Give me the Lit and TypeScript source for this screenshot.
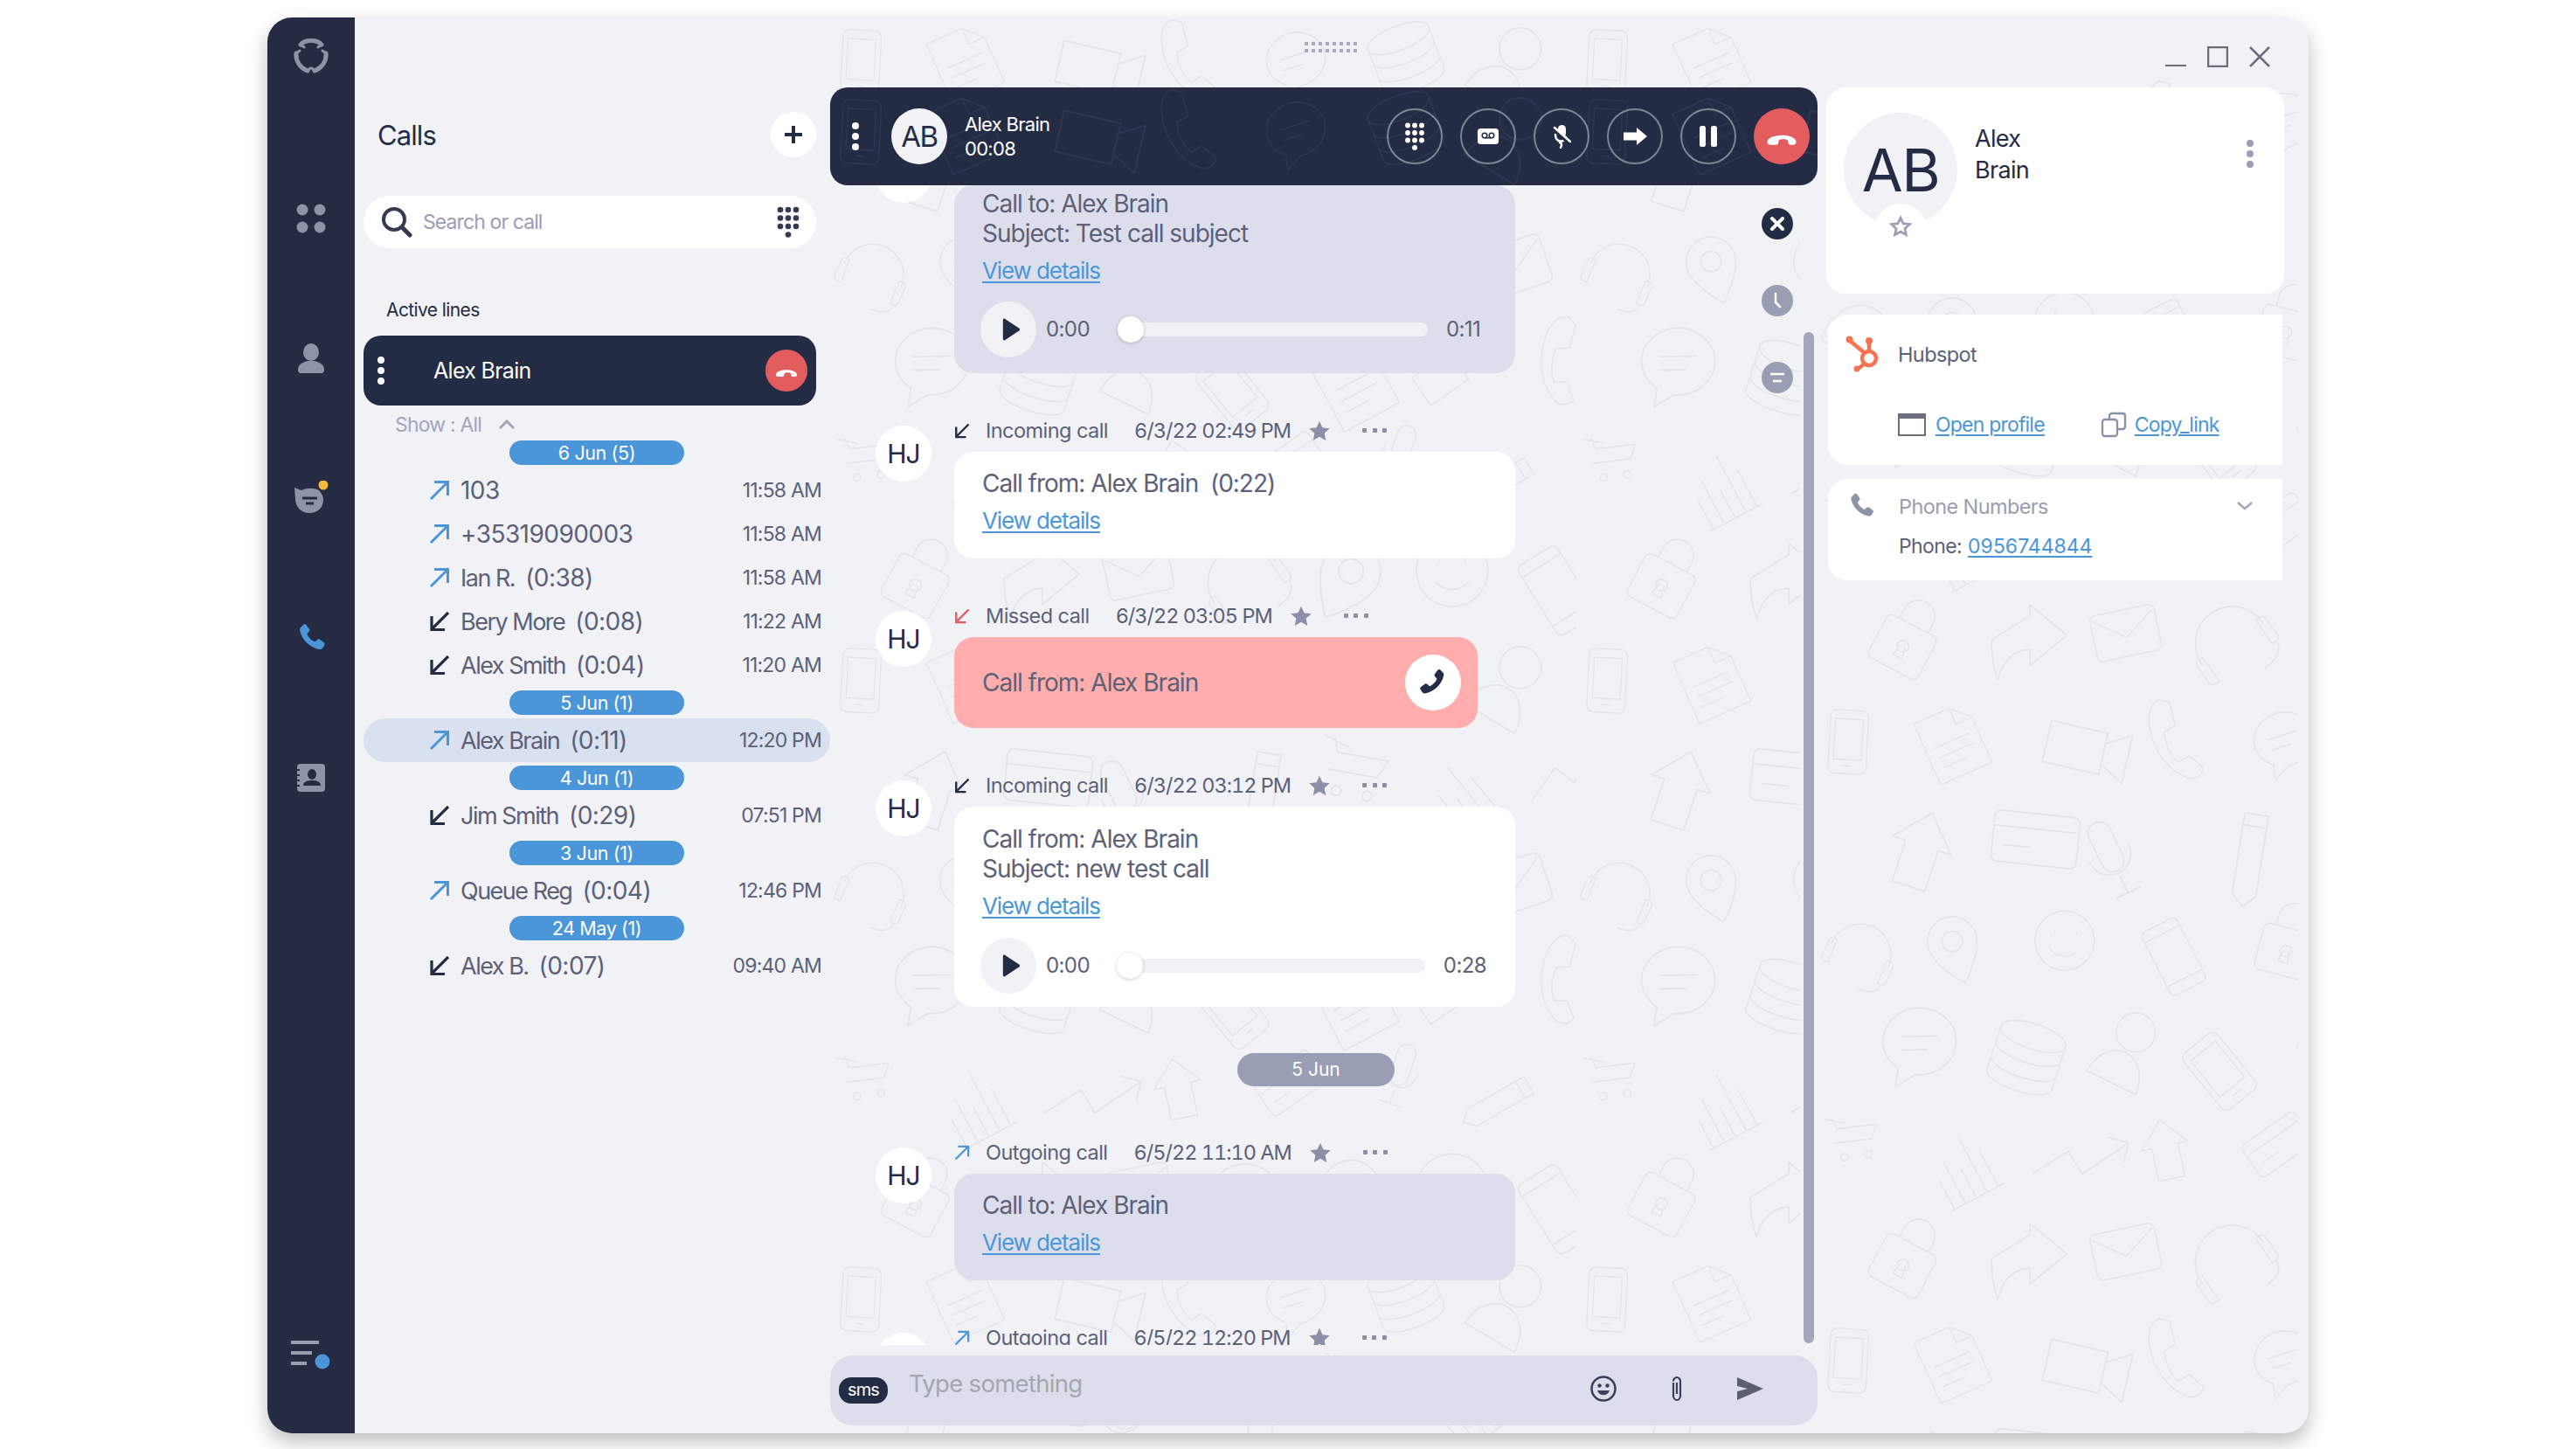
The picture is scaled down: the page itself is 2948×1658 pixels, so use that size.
import { LitElement, html, css, svg } from "lit";
import { customElement } from "lit/decorators.js";

const shapes = [
  "M0 10a10 10 0 0 1 10-10h40a10 10 0 0 1 10 10v80a10 10 0 0 1-10 10H10a10 10 0 0 1-10-10zM8 14h44v64H8zM24 88h12",
  "M0 8a8 8 0 0 1 8-8h74a8 8 0 0 1 8 8v48a8 8 0 0 1-8 8H8a8 8 0 0 1-8-8zM4 8l41 30 41-30",
  "M30 0a14 14 0 0 1 14 14v36a14 14 0 0 1-28 0V14A14 14 0 0 1 30 0zM4 40c0 36 52 36 52 0M30 72v22M14 94h32",
  "M0 18c0-24 96-24 96 0s-96 24-96 0M0 18v22c0 22 96 22 96 0V18M0 40v22c0 22 96 22 96 0V40M0 62v20c0 22 96 22 96 0V62",
  "M0 44a8 8 0 0 1 8-8h60a8 8 0 0 1 8 8v50a8 8 0 0 1-8 8H8a8 8 0 0 1-8-8zM16 36V22a22 22 0 0 1 44 0v14M38 60a8 8 0 1 0 .1 0M34 68l-3 16h14l-3-16",
  "M20 90V40H4L40 0l36 40H60v50z",
  "M10 0C-4 10-4 30 10 58c14 26 34 42 60 48 14 2 22-8 22-18L68 74 54 86C40 78 30 62 26 46l14-12L26 2z",
  "M44 0a44 44 0 1 1-.1 0zM28 30v4M60 30v4M24 58c10 12 30 12 40 0",
  "M4 50v40M20 30v60M36 50v40M52 10v80M68 40v50M0 92h76",
  "M0 0h58l26 26v74H0zM58 0v26h26M14 46h56M14 62h56M14 78h36",
  "M0 60a48 48 0 0 1 96 0M-6 58a6 6 0 0 1 6-6h6v38H0a6 6 0 0 1-6-6zM102 58a6 6 0 0 0-6-6h-6v38h6a6 6 0 0 0 6-6zM96 90c0 14-14 20-30 20",
  "M0 88L68 20l20 20-68 68H0zM58 30l20 20",
  "M36 0a26 26 0 1 1-.1 0zM0 100c2-30 20-44 36-44s34 14 36 44z",
  "M0 44l48-30V0l46 38-46 38V56C30 56 14 68 8 94 2 78 0 60 0 44z",
  "M0 8a8 8 0 0 1 8-8h84a8 8 0 0 1 8 8v44a8 8 0 0 1-8 8H8a8 8 0 0 1-8-8zM0 18h100M14 40h30",
  "M44 0C20 0 0 18 0 40c0 14 8 24 18 32l-4 22 24-14h6c24 0 44-18 44-40S68 0 44 0zM22 34h44M22 50h30",
  "M0 8a8 8 0 0 1 8-8h40a8 8 0 0 1 8 8v84a8 8 0 0 1-8 8H8a8 8 0 0 1-8-8zM0 14h56M0 84h56",
  "M0 70l34-36 22 22 44-50M76 6h24v24",
  "M0 28h66v48H0zM66 40l28-16v56L66 64",
  "M34 0a34 34 0 0 1 34 34c0 26-34 60-34 60S0 60 0 34A34 34 0 0 1 34 0zM34 20a14 14 0 1 0 .1 0",
  "M0 0l30 10M10 40h60l10-22H18l-6-18M24 58a6 6 0 1 0 .1 0M62 58a6 6 0 1 0 .1 0",
];

const tile = (() => {
  const out: unknown[] = [];
  let seed = 17;
  const rnd = () => { seed = (seed * 97 + 13) % 1009; return seed / 1009; };
  for (let r = 0; r < 6; r++) for (let k = 0; k < 7; k++) {
    const x = k * 122 + (r % 2) * 60 + rnd() * 20;
    const y = r * 118 + rnd() * 20;
    const rot = Math.round(rnd() * 80 - 40);
    const sc = 0.72 + rnd() * 0.3;
    out.push(svg`<path transform="translate(${x} ${y}) rotate(${rot} 45 45) scale(${sc})" d=${shapes[(r * 5 + k * 8 + k) % shapes.length]}/>`);
  }
  return out;
})();

const doodles = (c: string, id: string) => svg`
<defs><pattern id=${id} width="854" height="708" patternUnits="userSpaceOnUse">
<g fill="none" stroke=${c} stroke-width="2" stroke-linejoin="round" stroke-linecap="round">${tile}</g></pattern></defs>
<rect width="100%" height="100%" fill=${"url(#" + id + ")"}/>`;

const I = {
  phone: (c: string) => svg`<path fill=${c} d="M6.6 2.2c.6-.4 1.4-.3 1.9.3l2.200 3c.4.6.4 1.300-.1 1.800L9.300 8.800c-.2.2-.2.5-.1.8.9 1.900 3 4.100 5 5 .3.1.6.1.8-.1l1.500-1.300c.5-.5 1.300-.5 1.800-.1l3 2.200c.6.5.7 1.300.3 1.900l-1.200 1.900c-.6.9-1.700 1.400-2.800 1.100C10.900 18.800 5.200 13.100 3.900 6.700c-.3-1.100.2-2.200 1.100-2.800z"/>`,
  hang: svg`<path fill="#fff" d="M3 15.500c0-5.500 18-5.500 18 0 0 1-.8 1.800-1.800 1.800h-1.700c-.8 0-1.500-.7-1.500-1.500v-.8c0-1.700-6-1.700-6 0v.8c0 .8-.7 1.500-1.500 1.500H4.800C3.800 17.300 3 16.500 3 15.500z"/>`,
  up: (c: string) => svg`<path fill="none" stroke=${c} stroke-width="3" d="M2 22L21 3M6 2.500h15.500V18"/>`,
  down: (c: string) => svg`<path fill="none" stroke=${c} stroke-width="3.200" d="M22 2L4 20M3 6v15.500h15"/>`,
  star: (c: string) => svg`<path fill=${c} d="M12 1.500l3.200 7 7.600.900-5.600 5.200 1.500 7.500L12 18.300l-6.700 3.800 1.500-7.500L1.200 9.400l7.600-.900z"/>`,
  play: svg`<path fill="#242b45" d="M5 2.500v19c0 1 1 1.500 1.800 1L21 13c.7-.5.7-1.500 0-2L6.800 1.500C6 1 5 1.500 5 2.500z"/>`,
};

const ic = (body: unknown, size = 24, cls = "") => html`<svg class=${cls} width=${size} height=${size} viewBox="0 0 24 24">${body}</svg>`;

const keypad = (c: string, w: number, h: number) => {
  const dots = [];
  for (let r = 0; r < 3; r++) for (let k = 0; k < 3; k++) dots.push(svg`<circle cx=${4 + k * 9} cy=${4 + r * 9.5} r="3.300" fill=${c}/>`);
  dots.push(svg`<circle cx="13" cy="32.500" r="3.300" fill=${c}/>`);
  return html`<svg width=${w} height=${h} viewBox="0 0 26 36">${dots}</svg>`;
};

type Msg = { kind: "in" | "out" | "miss"; label: string; date: string; tone: "white" | "blue" | "red"; lines: string[]; link?: boolean; audio?: string; };

const msgs: Msg[] = [
  { kind: "in", label: "Incoming call", date: "6/3/22 02:49 PM", tone: "white", lines: ["Call from: Alex Brain\u00a0 (0:22)"], link: true },
  { kind: "miss", label: "Missed call", date: "6/3/22 03:05 PM", tone: "red", lines: ["Call from: Alex Brain"] },
  { kind: "in", label: "Incoming call", date: "6/3/22 03:12 PM", tone: "white", lines: ["Call from: Alex Brain", "Subject: new test call"], link: true, audio: "0:28" },
];

@customElement("app-root")
export class AppRoot extends LitElement {
  static styles = css`
    :host { display: block; width: 2948px; height: 1658px; background: #fff; font-family: Inter, "Noto Sans", sans-serif; color: #5c6178; overflow: hidden; }
    * { box-sizing: border-box; }
    svg { display: block; flex: none; }
    .page { padding: 20px 306px 18px; height: 100%; }
    .win { display: flex; height: 1620px; width: 2336px; background: #f0f2f6; border-radius: 28px; box-shadow: 0 10px 22px rgba(0,0,0,.26); overflow: hidden; position: relative; }
    .side { width: 100px; flex: none; background: #252b43; display: flex; flex-direction: column; align-items: center; }
    .logo { height: 86px; display: flex; align-items: center; justify-content: center; }
    .nav { margin-top: 64px; display: flex; flex-direction: column; }
    .nav div { height: 160px; display: flex; align-items: center; justify-content: center; position: relative; }
    .spring { flex: 1; }
    .bottom { margin-bottom: 72px; }

    .list { width: 544px; flex: none; padding: 0 0 0 10px; position: relative; z-index: 2; }
    .calls-top { display: flex; align-items: center; justify-content: space-between; height: 52px; margin: 108px 16px 0 16px; }
    .calls-top h1 { margin: 0; font-size: 31px; font-weight: 400; color: #242b45; letter-spacing: -.9px; }
    .plus { width: 52px; height: 52px; border-radius: 50%; background: #fff; display: flex; align-items: center; justify-content: center; }
    .search { margin: 44px 16px 0 0; height: 60px; border-radius: 30px; background: #fff; display: flex; align-items: center; padding: 0 19px 0 20px; }
    .search span { flex: 1; margin-left: 12px; font-size: 23px; letter-spacing: -.9px; color: #9a9db5; }
    .active-t { margin: 57px 0 0 26px; height: 28px; line-height: 28px; font-size: 21px; letter-spacing: -.6px; color: #242b45; }
    .active { margin: 15px 16px 0 0; height: 80px; border-radius: 20px; background: #242b45; display: flex; align-items: center; color: #fff; padding: 0 10px 0 16px; }
    .active .n { flex: 1; margin-left: 56px; font-size: 25px; letter-spacing: -.7px; }
    .hang { width: 48px; height: 48px; border-radius: 50%; background: #e35d5f; display: flex; align-items: center; justify-content: center; }
    .dots3 { display: flex; flex-direction: column; gap: 4px; }
    .dots3 i { display: block; width: 8px; height: 8px; border-radius: 50%; background: #fff; }
    .show { display: flex; align-items: center; margin: 8px 0 0 36px; height: 28px; font-size: 23px; letter-spacing: -.8px; color: #a3a6bb; gap: 20px; }
    .pill { width: 200px; height: 28px; margin: 4px 0 4px 167px; border-radius: 14px; background: #4a96d8; color: #fff; font-size: 21.5px; letter-spacing: -.4px; text-align: center; line-height: 28px; }
    .row { height: 50px; display: flex; align-items: center; padding: 0 10px 0 75px; border-radius: 25px; }
    .row.sel { background: #d9e0ef; }
    .row .t { margin-left: 12px; font-size: 28px; letter-spacing: -.55px; white-space: pre; }
    .row .nm2 { margin-left: 12px; font-size: 27px; letter-spacing: -1.5px; white-space: pre; }
    .row .du { margin-left: 12px; font-size: 28px; letter-spacing: -.55px; }
    .row .sp { flex: 1; }
    .row .h { font-size: 23px; letter-spacing: -.8px; }

    .chat { width: 1130px; flex: none; position: relative; display: flex; flex-direction: column; height: 1620px; }
    .bgl { position: absolute; left: 0; top: 0; width: 1110px; height: 100%; }
    .handle { position: absolute; left: 543px; top: 28px; z-index: 1; }
    .bar { position: relative; margin-top: 80px; height: 112px; flex: none; border-radius: 20px; background: #242b45; color: #fff; display: flex; align-items: center; padding: 0 9px 0 25px; z-index: 3; overflow: hidden; }
    .bar .bgb { position: absolute; inset: 0; width: 100%; height: 100%; }
    .bar > :not(.bgb) { position: relative; }
    .av { border-radius: 50%; background: #fff; display: flex; align-items: center; justify-content: center; color: #242b45; flex: none; width: 64px; height: 64px; font-size: 30px; letter-spacing: -1px; }
    .bar .av { background: #f0f2f6; margin-left: 37px; font-size: 33px; letter-spacing: -1.5px; }
    .who { margin-left: 20px; flex: 1; font-size: 22px; line-height: 28px; letter-spacing: -.7px; }
    .btn { width: 64px; height: 64px; border-radius: 50%; border: 2px solid rgba(255,255,255,.42); display: flex; align-items: center; justify-content: center; margin-left: 20px; flex: none; }
    .btn.end { background: #e35d5f; border: 0; }

    .scroll { flex: none; height: 1327px; overflow: hidden; position: relative; padding-left: 52px; }
    .msg { display: grid; grid-template-columns: 64px 1fr; column-gap: 26px; margin-top: 41px; }
    .msg .av { margin-top: 19px; }
    .msg-first { margin-top: -25px; }
    .msg-first .av { margin-top: -19px; }
    .bub { width: 642px; border-radius: 22px; padding: 20px 33px 0 32px; font-size: 28px; line-height: 34px; letter-spacing: -1px; }
    .bub.white { background: #fff; }
    .bub.blue { background: #dcdfeb; }
    .bub.red { background: #ffadad; width: 599px; height: 104px; padding: 0 19px 0 32px; display: flex; align-items: center; justify-content: space-between; }
    .plain { height: 122px; padding-top: 19px; }
    a { color: #4a96d8; text-decoration: underline; text-underline-offset: 3px; }
    .vd { display: block; margin-top: 9px; font-size: 26px; line-height: 34px; letter-spacing: -1.1px; }
    .head { height: 49px; display: flex; align-items: center; font-size: 23.5px; letter-spacing: -.55px; white-space: nowrap; }
    .head .lb { margin-left: 18px; }
    .head .dt { margin-left: 30px; letter-spacing: -1px; font-variant-numeric: tabular-nums; }
    .head .st { margin-left: 20px; }
    .head .more { margin-left: 36px; display: flex; gap: 6.5px; }
    .head .more i { width: 5px; height: 5px; border-radius: 1px; background: #8b8fa8; display: block; }
    .aud { display: flex; align-items: center; height: 64px; margin-top: 19px; font-size: 24px; letter-spacing: -.6px; }
    .pb { width: 64px; height: 64px; border-radius: 50%; background: #f0f2f6; display: flex; align-items: center; justify-content: center; flex: none; margin-left: -2px; padding-left: 3px; }
    .tt1 { margin-left: 11px; width: 83px; }
    .sl { width: 354px; height: 16px; border-radius: 8px; background: #f0f2f6; position: relative; }
    .sl i { position: absolute; left: -1px; top: -7px; width: 30px; height: 30px; border-radius: 50%; background: #fff; box-shadow: 0 1px 4px rgba(0,0,0,.2); }
    .tt2 { margin-left: 21px; }
    .bub.a1 { padding-top: 4px; height: 215px; margin-top: 25px; }
    .a1 .aud { margin-top: 18px; }
    .tall { height: 229px; }
    .call-b { width: 64px; height: 64px; border-radius: 50%; background: #fff; display: flex; align-items: center; justify-content: center; }
    .chip { width: 180px; height: 38px; border-radius: 19px; background: #9a9eb5; color: #fff; margin: 53px 0 0 414px; text-align: center; line-height: 38px; font-size: 21px; }
    .chip + .msg { margin-top: 51px; }
    .fl { position: absolute; left: 1066px; width: 36px; height: 36px; border-radius: 50%; display: flex; align-items: center; justify-content: center; background: #9a9eb5; z-index: 2; }
    .fl.dk { background: #242b45; top: 218px; }
    .fl.f2 { top: 306px; }
    .fl.f3 { top: 394px; }
    .sbar { position: absolute; left: 1114px; top: 360px; width: 12px; height: 1157px; border-radius: 6px; background: #a3a7bc; z-index: 2; }
    .input { flex: none; margin-top: 12px; height: 80px; background: #dcdfeb; border-radius: 26px; display: flex; padding: 0 62px 0 10px; position: relative; z-index: 3; align-items: flex-start; }
    .sms { width: 56px; height: 30px; margin-top: 25px; border-radius: 14px; background: #242b45; color: #fff; font-size: 20px; letter-spacing: -.8px; text-align: center; line-height: 28px; }
    .ph { flex: 1; margin: 14px 0 0 24px; font-size: 27.5px; line-height: 36px; letter-spacing: -.7px; color: #a4a6b0; }
    .icons { display: flex; align-items: center; height: 76px; gap: 60px; }

    .right { flex: 1; position: relative; }
    .bgr { position: absolute; left: 0; top: 70px; width: 550px; height: 1550px; }
    .ctl { position: absolute; top: 33px; left: 398px; display: flex; gap: 24px; z-index: 2; }
    .rc { position: relative; background: #fff; }
    .prof { margin: 80px 28px 0 10px; height: 236px; border-radius: 22px; padding: 29px 0 0 20px; display: flex; }
    .big { width: 130px; height: 130px; border-radius: 50%; background: #f0f2f6; font-size: 68px; letter-spacing: -1.5px; color: #242b45; display: flex; align-items: center; justify-content: center; position: relative; flex: none; }
    .notch { position: absolute; left: 35px; top: 104px; width: 60px; height: 60px; border-radius: 50%; background: #fff; display: flex; align-items: center; justify-content: center; padding-bottom: 8px; }
    .nm { margin: 12px 0 0 20px; font-size: 27px; line-height: 36px; letter-spacing: -.7px; color: #242b45; flex: 1; }
    .vm { margin: 31px 35px 0 0; display: flex; flex-direction: column; gap: 4px; }
    .vm i { display: block; width: 8px; height: 8px; border-radius: 50%; background: #9a9eb5; }
    .hub { margin: 24px 30px 0 12px; height: 172px; border-radius: 22px 0 0 22px; padding: 24px 0 0 20px; }
    .lr { display: flex; align-items: center; font-size: 23.5px; letter-spacing: -.6px; }
    .lr .lbl { margin-left: 18px; }
    .lnks { display: flex; align-items: center; margin: 45px 0 0 60px; font-size: 23px; letter-spacing: -.8px; }
    .lnks .a1l { margin-left: 11px; }
    .lnks .a2l { margin-left: 9px; }
    .lnks .cp { margin-left: 64px; }
    .pn { margin: 16px 30px 0 12px; height: 116px; border-radius: 22px 0 0 22px; padding: 14px 0 0 21px; }
    .pn .g { color: #9a9db0; flex: 1; }
    .pn .lr .lbl { margin-left: 26px; }
    .pn .cv { margin-right: 33px; }
    .pl { margin: 15px 0 0 60px; font-size: 23px; letter-spacing: -.6px; }
    .pl a { letter-spacing: 0; margin-left: 7px; }
    .shift { margin-top: 6px; }
  `;

  private head(m: { kind: string; label: string; date: string }) {
    const arrow = m.kind === "out" ? I.up("#4a96d8") : m.kind === "miss" ? I.down("#e35d5f") : I.down("#242b45");
    return html`<div class="head">${ic(arrow, 18)}<span class="lb">${m.label}</span><span class="dt">${m.date}</span><span class="st">${ic(I.star("#8b8fa8"), 26)}</span><span class="more"><i></i><i></i><i></i></span></div>`;
  }

  private audio(d: string) {
    return html`<div class="aud"><div class="pb">${ic(I.play, 28)}</div><span class="tt1">0:00</span><div class="sl"><i></i></div><span class="tt2">${d}</span></div>`;
  }

  private msg(m: Msg) {
    return html`<div class="msg"><div class="av">HJ</div><div>${this.head(m)}
      ${m.tone === "red"
        ? html`<div class="bub red"><span>${m.lines[0]}</span><div class="call-b">${ic(svg`<g transform="translate(24 0) scale(-1 1)">${I.phone("#242b45")}</g>`, 36)}</div></div>`
        : html`<div class="bub ${m.tone} ${m.audio ? "tall" : "plain"}">${m.lines.map(l => html`<div>${l}</div>`)}${m.link ? html`<a class="vd">View details</a>` : ""}${m.audio ? this.audio(m.audio) : ""}</div>`}
    </div></div>`;
  }

  private row(kind: "in" | "out", name: string, dur: string, h: string, sel = false) {
    return html`<div class="row ${sel ? "sel" : ""}">${ic(kind === "out" ? I.up("#4a96d8") : I.down("#242b45"), 24)}${dur ? html`<span class="nm2">${name}</span><span class="du">${dur}</span>` : html`<span class="t">${name}</span>`}<span class="sp"></span><span class="h">${h}</span></div>`;
  }

  render() {
    const grip = [];
    for (let r = 0; r < 2; r++) for (let k = 0; k < 8; k++) grip.push(svg`<rect x=${k * 8} y=${r * 8} width="4" height="4" fill="#a9abc0"/>`);
    return html`<div class="page"><div class="win">
      <div class="side">
        <div class="logo"><svg width="42" height="42" viewBox="0 0 42 42" fill="none" stroke="#8f93a8" stroke-width="5" stroke-linecap="round"><path d="M9 9C14 3 28 3 33 9"/><path d="M4 19C3 28 9 36 17 39M38 19C39 28 33 36 25 39"/><path stroke-width="3" d="M9 9l4 3M33 9l-4 3M4 19l4-3M38 19l-4-3M17 39l3-3M25 39l-3-3"/></svg></div>
        <div class="nav">
          <div><svg width="34" height="34" viewBox="0 0 34 34" fill="#8f93a8"><circle cx="7" cy="7" r="6.500"/><circle cx="27" cy="7" r="6.500"/><circle cx="7" cy="27" r="6.500"/><circle cx="27" cy="27" r="6.500"/></svg></div>
          <div><svg width="30" height="34" viewBox="0 0 30 34" fill="#8f93a8"><ellipse cx="15" cy="10" rx="9" ry="10"/><path d="M0 30c0-6 6-9 11-10h8c5 1 11 4 11 10 0 2-1 4-3 4H3c-2 0-3-2-3-4z"/></svg></div>
          <div><svg class="shift" width="46" height="46" viewBox="0 0 46 46"><path fill="#8f93a8" d="M4 8l8 3c7-3 14-3 20 0 3 3 5 7 5 11 0 9-7 15-16 15S5 30 5 21z"/><path stroke="#252b43" stroke-width="3" d="M13 20h17M17 26h9"/><circle cx="37" cy="5" r="5.500" fill="#f5b93c"/></svg></div>
          <div>${ic(I.phone("#4a96d8"), 38)}</div>
          <div><svg width="34" height="32" viewBox="0 0 34 32"><rect x="1" width="32" height="32" rx="4" fill="#8f93a8"/><ellipse cx="18" cy="12" rx="5" ry="6" fill="#252b43"/><path d="M8 25c0-5 5-6 10-6s10 1 10 6z" fill="#252b43"/><path stroke="#252b43" stroke-width="2" d="M0 7h4M0 13h4M0 19h4M0 25h4"/></svg></div>
        </div>
        <div class="spring"></div>
        <div class="bottom"><svg width="46" height="34" viewBox="0 0 46 34"><path fill="#9a9db0" d="M0 0h32v4H0zM0 12h24v4H0zM0 24h18v4H0z"/><circle cx="36" cy="24" r="8.500" fill="#4a96d8"/></svg></div>
      </div>
      <div class="list">
        <div class="calls-top"><h1>Calls</h1><div class="plus"><svg width="22" height="22" viewBox="0 0 22 22"><path stroke="#242b45" stroke-width="4" d="M11 1v20M1 11h20"/></svg></div></div>
        <div class="search"><svg width="36" height="36" viewBox="0 0 36 36" fill="none" stroke="#343a52" stroke-width="4"><circle cx="15" cy="15" r="12"/><path stroke-width="5" stroke-linecap="round" d="M24 24l9 9"/></svg><span>Search or call</span>${keypad("#343a52", 26, 36)}</div>
        <div class="active-t">Active lines</div>
        <div class="active"><div class="dots3"><i></i><i></i><i></i></div><span class="n">Alex Brain</span><div class="hang">${ic(I.hang, 32)}</div></div>
        <div class="show"><span>Show : All</span><svg width="18" height="12" viewBox="0 0 18 12" fill="none" stroke="#a3a6bb" stroke-width="3"><path d="M1 10l8-8 8 8"/></svg></div>
        <div class="pill">6 Jun (5)</div>
        ${this.row("out", "103", "", "11:58 AM")}
        ${this.row("out", "+35319090003", "", "11:58 AM")}
        ${this.row("out", "Ian R.", "(0:38)", "11:58 AM")}
        ${this.row("in", "Bery More", "(0:08)", "11:22 AM")}
        ${this.row("in", "Alex Smith", "(0:04)", "11:20 AM")}
        <div class="pill">5 Jun (1)</div>
        ${this.row("out", "Alex Brain", "(0:11)", "12:20 PM", true)}
        <div class="pill">4 Jun (1)</div>
        ${this.row("in", "Jim Smith", "(0:29)", "07:51 PM")}
        <div class="pill">3 Jun (1)</div>
        ${this.row("out", "Queue Reg", "(0:04)", "12:46 PM")}
        <div class="pill">24 May (1)</div>
        ${this.row("in", "Alex B.", "(0:07)", "09:40 AM")}
      </div>
      <div class="chat">
        <svg class="bgl">${doodles("#e4e6eb", "pa")}</svg>
        <svg class="handle" width="60" height="12" viewBox="0 0 60 12">${grip}</svg>
        <div class="bar">
          <svg class="bgb">${doodles("#2e3550", "pb")}</svg>
          <div class="dots3"><i></i><i></i><i></i></div>
          <div class="av">AB</div>
          <div class="who">Alex Brain<br />00:08</div>
          <div class="btn">${keypad("#fff", 24, 32)}</div>
          <div class="btn"><svg width="24" height="18" viewBox="0 0 24 18"><rect width="24" height="18" rx="3.500" fill="#fff"/><g fill="none" stroke="#242b45" stroke-width="1.600"><circle cx="8" cy="8" r="2.800"/><circle cx="16" cy="8" r="2.800"/><path d="M8 10.800h8"/></g></svg></div>
          <div class="btn"><svg width="22" height="28" viewBox="0 0 22 28" fill="none" stroke-linecap="round"><rect x="7" y="1" width="9" height="14" rx="4.500" fill="#fff"/><path stroke="#fff" stroke-width="2.500" d="M4 12c0 10 12 9 12 3M9 21c3 1 2 4 1 6"/><path stroke="#242b45" stroke-width="4" d="M3 7l17 15"/><path stroke="#fff" stroke-width="2.500" d="M3 4l18 16"/></svg></div>
          <div class="btn"><svg width="27" height="20" viewBox="0 0 27 20"><path fill="#fff" d="M0 5.500h15V0l12 10-12 10v-5.500H0z"/></svg></div>
          <div class="btn"><svg width="20" height="24" viewBox="0 0 20 24" fill="#fff"><rect width="7" height="24" rx="2.500"/><rect x="13" width="7" height="24" rx="2.500"/></svg></div>
          <div class="btn end">${ic(I.hang, 44)}</div>
        </div>
        <div class="fl dk"><svg width="20" height="20" viewBox="0 0 20 20"><path stroke="#fff" stroke-width="4" stroke-linecap="round" d="M4 4l12 12M16 4L4 16"/></svg></div>
        <div class="fl f2"><svg width="20" height="20" viewBox="0 0 20 20" fill="none"><path stroke="#fff" stroke-width="2.500" stroke-linecap="round" d="M8 2v10l5 5"/></svg></div>
        <div class="fl f3"><svg width="20" height="12" viewBox="0 0 20 12"><path stroke="#fff" stroke-width="2.500" d="M2 2h16M5 10h10"/></svg></div>
        <div class="sbar"></div>
        <div class="scroll">
          <div class="msg-first msg">
            <div class="av"></div>
            <div>
              <div class="bub blue a1"><div>Call to: Alex Brain</div><div>Subject: Test call subject</div><a class="vd">View details</a>${this.audio("0:11")}</div>
            </div>
          </div>
          ${msgs.map(m => this.msg(m))}
          <div class="chip">5 Jun</div>
          ${this.msg({ kind: "out", label: "Outgoing call", date: "6/5/22 11:10 AM", tone: "blue", lines: ["Call to: Alex Brain"], link: true })}
          <div class="msg"><div class="av"></div><div>${this.head({ kind: "out", label: "Outgoing call", date: "6/5/22 12:20 PM" })}</div></div>
        </div>
        <div class="input"><div class="sms">sms</div><div class="ph">Type something</div>
          <div class="icons">
            <svg width="30" height="30" viewBox="0 0 30 30"><circle cx="15" cy="15" r="13.500" fill="none" stroke="#3a4058" stroke-width="2.500"/><circle cx="10.500" cy="11.500" r="2.200" fill="#3a4058"/><circle cx="19.500" cy="11.500" r="2.200" fill="#3a4058"/><path d="M8 17c2 7 12 7 14 0z" fill="#3a4058"/></svg>
            <svg width="18" height="30" viewBox="0 0 18 30" fill="none" stroke="#3a4058" stroke-width="2.200"><path d="M9 8v13M5 6.500C5 4 7 2 9 2s4 2 4 4.500V23c0 3-2 5-4 5s-4-2-4-5V8"/></svg>
            <svg width="30" height="26" viewBox="0 0 30 26"><path fill="#5c5f6c" d="M0 0l30 13L0 26V16l12-3L0 10z"/></svg>
          </div>
        </div>
      </div>
      <div class="right">
        <svg class="bgr">${doodles("#e4e6eb", "pc")}</svg>
        <div class="ctl">
          <svg width="24" height="24" viewBox="0 0 24 24"><path stroke="#6b6f7d" stroke-width="2" d="M0 22h24"/></svg>
          <svg width="24" height="24" viewBox="0 0 24 24"><rect x="1" y="1" width="22" height="22" fill="none" stroke="#6b6f7d" stroke-width="2.500"/></svg>
          <svg width="24" height="24" viewBox="0 0 24 24"><path stroke="#6b6f7d" stroke-width="2.500" d="M1 1l22 22M23 1L1 23"/></svg>
        </div>
        <div class="rc prof">
          <div class="big">AB<div class="notch"><svg width="26" height="26" viewBox="0 0 24 24" fill="none" stroke="#9a9eb5" stroke-width="2.500"><path d="M12 3l2.800 6 6.700.800-4.900 4.600 1.300 6.600L12 17.700 6.100 21l1.300-6.600-4.900-4.600 6.700-.800z"/></svg></div></div>
          <div class="nm">Alex<br />Brain</div>
          <div class="vm"><i></i><i></i><i></i></div>
        </div>
        <div class="rc hub">
          <div class="lr"><svg width="42" height="42" viewBox="0 0 42 42" fill="none" stroke="#f7734f" stroke-width="4.500"><circle cx="27" cy="26" r="8"/><path d="M4 5l18 15M27 8v10M21 33l-7 5"/><circle cx="4.500" cy="4.500" r="4" fill="#f7734f" stroke="none"/><circle cx="27" cy="6" r="4" fill="#f7734f" stroke="none"/><circle cx="13" cy="38" r="3.500" fill="#f7734f" stroke="none"/></svg><span class="lbl">Hubspot</span></div>
          <div class="lnks"><svg width="32" height="26" viewBox="0 0 32 26" fill="none" stroke="#6b6f7d" stroke-width="2"><rect x="1" y="1" width="30" height="24"/><path stroke-width="5" d="M0 3.500h32"/></svg><a class="a1l">Open profile</a><svg class="cp" width="30" height="30" viewBox="0 0 30 30" fill="none" stroke="#8b8fa8" stroke-width="2.300"><rect x="2" y="9" width="17" height="19" rx="3"/><path d="M10 9V5c0-2 1-3 3-3h12c2 0 3 1 3 3v12c0 2-1 3-3 3h-6"/></svg><a class="a2l">Copy_link</a></div>
        </div>
        <div class="rc pn">
          <div class="lr">${ic(I.phone("#8f93a8"), 34)}<span class="lbl g">Phone Numbers</span><svg class="cv" width="20" height="12" viewBox="0 0 20 12" fill="none" stroke="#a3a6bb" stroke-width="2.500"><path d="M2 2l8 7 8-7"/></svg></div>
          <div class="pl">Phone:<a>0956744844</a></div>
        </div>
      </div>
    </div></div>`;
  }
}
